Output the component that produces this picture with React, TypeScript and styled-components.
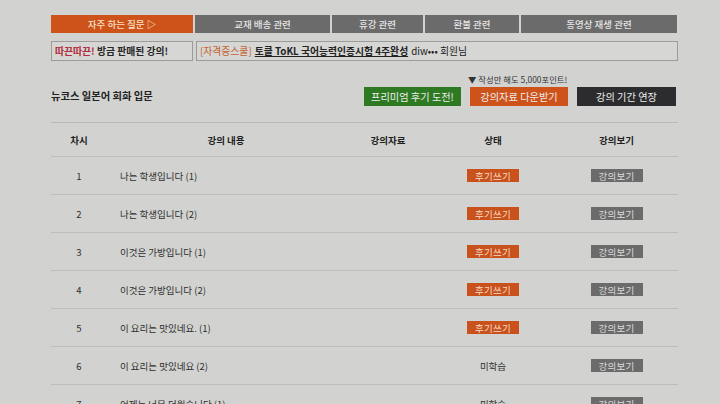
import styled, { createGlobalStyle } from 'styled-components';

const GlobalStyle = createGlobalStyle`
  body {
    margin: 0;
    background: #d2d3d1;
    font-family: "Noto Sans CJK KR", "Noto Sans", sans-serif;
    color: #222;
  }
`;

const Page = styled.div`
  width: 627px;
  padding: 15px 0 0 51px;
`;

// 상단 탭
const TabBar = styled.div`
  display: flex;
  gap: 2px;
  height: 18px;
`;

const Tab = styled.div<{ $active?: boolean; $w: number }>`
  width: ${(p) => p.$w}px;
  display: flex;
  align-items: center;
  justify-content: center;
  font-size: 9.5px;
  font-weight: 500;
  color: ${(p) => (p.$active ? '#f6e2c8' : '#e6e6e6')};
  background: ${(p) => (p.$active ? '#cd531b' : '#6b6b6b')};
`;

const TickerRow = styled.div`
  display: flex;
  gap: 3px;
  margin-top: 8px;
  height: 20px;
`;

const TickerBox = styled.div<{ $w: number }>`
  width: ${(p) => p.$w}px;
  box-sizing: border-box;
  border: 1px solid #9c9d9b;
  background: #d6d7d5;
  display: flex;
  align-items: center;
  padding-left: 3px;
  font-size: 9.8px;
  white-space: nowrap;
  overflow: hidden;
`;

const Hot = styled.span`
  color: #b02b3c;
  font-weight: 700;
`;

const Bold = styled.span`
  font-weight: 700;
  color: #262626;
`;

const School = styled.span`
  color: #c2622f;
  margin-right: 3px;
`;

const Course = styled.span`
  font-weight: 600;
  text-decoration: underline;
  margin-right: 3px;
`;

const HeadRow = styled.div`
  display: flex;
  justify-content: space-between;
  align-items: flex-end;
  margin-top: 12px;
  padding-right: 2px;
`;

const Title = styled.div`
  font-size: 10.3px;
  font-weight: 700;
  padding-bottom: 3px;
`;

const Actions = styled.div`
  display: flex;
  flex-direction: column;
  align-items: flex-start;
`;

const Note = styled.div`
  font-size: 8.4px;
  color: #333;
  margin: 0 0 2px 104px;
`;

const BtnGroup = styled.div`
  display: flex;
  gap: 9px;
`;

const ActBtn = styled.button<{ $bg: string; $w: number }>`
  width: ${(p) => p.$w}px;
  height: 19px;
  border: none;
  padding: 0;
  background: ${(p) => p.$bg};
  color: #eee;
  font-family: inherit;
  font-size: 10.2px;
`;

const Table = styled.div`
  margin-top: 16px;
  border-top: 1px solid #b9bab8;
`;

const Row = styled.div<{ $head?: boolean }>`
  display: grid;
  grid-template-columns: 56px 238px 86px 124px 123px;
  height: ${(p) => (p.$head ? 33 : 37)}px;
  border-bottom: 1px solid #bdbebc;
  align-items: center;
  font-size: 9.5px;
  font-weight: ${(p) => (p.$head ? 700 : 400)};
  color: ${(p) => (p.$head ? '#1e1e1e' : '#2e2e2e')};
`;

const Cell = styled.div<{ $left?: boolean }>`
  text-align: ${(p) => (p.$left ? 'left' : 'center')};
  padding-left: ${(p) => (p.$left ? 13 : 0)}px;
  display: flex;
  justify-content: ${(p) => (p.$left ? 'flex-start' : 'center')};
`;

const Badge = styled.span<{ $orange?: boolean }>`
  display: inline-flex;
  align-items: center;
  justify-content: center;
  width: 52px;
  height: 13px;
  font-size: 9.5px;
  letter-spacing: 0.3px;
  background: ${(p) => (p.$orange ? '#c9511b' : '#6b6b6b')};
  color: ${(p) => (p.$orange ? '#f6dcc6' : '#dadada')};
`;

const tabs = [
  { label: '자주 하는 질문 ▷', w: 142, active: true },
  { label: '교재 배송 관련', w: 135 },
  { label: '휴강 관련', w: 91 },
  { label: '환불 관련', w: 94 },
  { label: '동영상 재생 관련', w: 156 },
];

const lessons = [
  { no: 1, title: '나는 학생입니다 (1)', done: true },
  { no: 2, title: '나는 학생입니다 (2)', done: true },
  { no: 3, title: '이것은 가방입니다 (1)', done: true },
  { no: 4, title: '이것은 가방입니다 (2)', done: true },
  { no: 5, title: '이 요리는 맛있네요. (1)', done: true },
  { no: 6, title: '이 요리는 맛있네요 (2)', done: false },
  { no: 7, title: '어제는 너무 더웠습니다 (1)', done: false },
];

const App = () => {
  return (
    <Page>
      <GlobalStyle />
      <TabBar>
        {tabs.map((t) => (
          <Tab key={t.label} $w={t.w} $active={t.active}>
            {t.label}
          </Tab>
        ))}
      </TabBar>

      <TickerRow>
        <TickerBox $w={142}>
          <Hot>따끈따끈!</Hot>&nbsp;<Bold>방금 판매된 강의!</Bold>
        </TickerBox>
        <TickerBox $w={482}>
          <School>[자격증스쿨]</School>
          <Course>토클 ToKL 국어능력인증시험 4주완성</Course>
          diw••• 회원님
        </TickerBox>
      </TickerRow>

      <HeadRow>
        <Title>뉴코스 일본어 회화 입문</Title>
        <Actions>
          <Note>▼ 작성만 해도 5,000포인트!</Note>
          <BtnGroup>
            <ActBtn $bg="#2e7a22" $w={97}>프리미엄 후기 도전!</ActBtn>
            <ActBtn $bg="#cd531b" $w={98}>강의자료 다운받기</ActBtn>
            <ActBtn $bg="#2c2b2e" $w={99}>강의 기간 연장</ActBtn>
          </BtnGroup>
        </Actions>
      </HeadRow>

      <Table>
        <Row $head>
          <Cell>차시</Cell>
          <Cell>강의 내용</Cell>
          <Cell>강의자료</Cell>
          <Cell>상태</Cell>
          <Cell>강의보기</Cell>
        </Row>
        {lessons.map((l) => (
          <Row key={l.no}>
            <Cell>{l.no}</Cell>
            <Cell $left>{l.title}</Cell>
            <Cell />
            <Cell>{l.done ? <Badge $orange>후기쓰기</Badge> : '미학습'}</Cell>
            <Cell>
              <Badge>강의보기</Badge>
            </Cell>
          </Row>
        ))}
      </Table>
    </Page>
  );
};

export default App;
